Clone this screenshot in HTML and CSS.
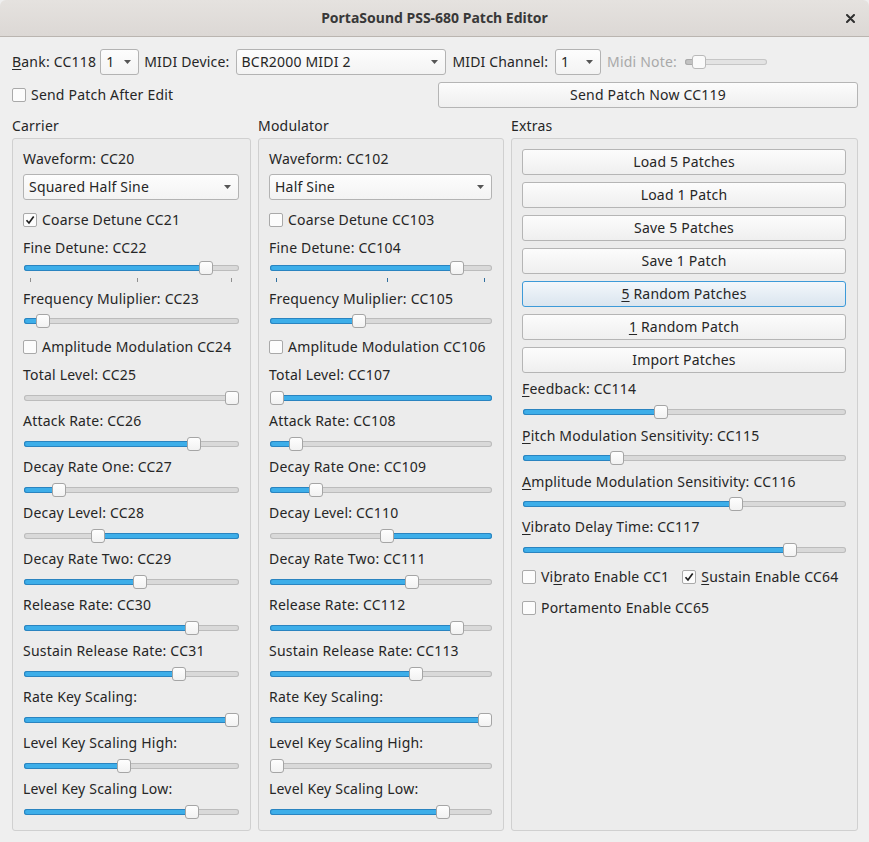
FILE: index.html
```html
<!DOCTYPE html>
<html>
<head>
<meta charset="utf-8">
<title>PortaSound PSS-680 Patch Editor</title>
<link rel="stylesheet" href="styles.css">
</head>
<body>
<div class="window">
  <header class="titlebar">
    <span></span>
    <span class="title">PortaSound PSS-680 Patch Editor</span>
    <svg class="close" width="9" height="9" viewBox="0 0 9 9"><path d="M1 1L8 8M8 1L1 8" stroke="#2f2f2f" stroke-width="2" stroke-linecap="round"/></svg>
  </header>

  <div class="content">
    <div class="toolbar">
      <span><u>B</u>ank: CC118</span>
      <div class="combo w-bank"><span>1</span><svg class="arrow" width="7" height="4" viewBox="0 0 7 4"><path d="M0 0H7L3.5 4Z" fill="#555"/></svg></div>
      <span class="lbl-dev">MIDI Device:</span>
      <div class="combo w-dev"><span>BCR2000 MIDI 2</span><svg class="arrow" width="7" height="4" viewBox="0 0 7 4"><path d="M0 0H7L3.5 4Z" fill="#555"/></svg></div>
      <span class="lbl-ch">MIDI Channel:</span>
      <div class="combo w-ch"><span>1</span><svg class="arrow" width="7" height="4" viewBox="0 0 7 4"><path d="M0 0H7L3.5 4Z" fill="#555"/></svg></div>
      <span class="lbl-note disabled">Midi Note:</span>
      <div class="slider mini" style="--p:0.103"><div class="track"><div class="fill"></div></div><div class="handle"></div></div>
    </div>

    <div class="row2">
      <div class="check"><span class="box"></span><span>Send Patch After Edit</span></div>
      <div class="btn">Send Patch Now CC119</div>
    </div>

    <div class="columns">
      <section class="col">
        <div class="col-title">Carrier</div>
        <div class="group">
          <div class="lbl mt0">Waveform: CC20</div>
          <div class="combo"><span>Squared Half Sine</span><svg class="arrow" width="7" height="4" viewBox="0 0 7 4"><path d="M0 0H7L3.5 4Z" fill="#555"/></svg></div>
          <div class="check mt10"><span class="box"><svg width="10" height="10" viewBox="0 0 10 10"><path d="M1.5 5.2L4 8L8.7 1.5" fill="none" stroke="#1e1e1e" stroke-width="1.7"/></svg></span><span>Coarse Detune CC21</span></div>
          <div class="lbl mt8">Fine Detune: CC22</div>
          <div class="slider ticked mt1" style="--p:0.87"><div class="track"><div class="fill"></div></div><div class="handle"></div><div class="ticks ticks-car"></div></div>
          <div class="lbl">Frequency Muliplier: CC23</div>
          <div class="slider mt3" style="--p:0.06"><div class="track"><div class="fill"></div></div><div class="handle"></div></div>
          <div class="check mt7"><span class="box"></span><span>Amplitude Modulation CC24</span></div>
          <div class="lbl mt8">Total Level: CC25</div>
          <div class="slider inv" style="--p:1"><div class="track"><div class="fill"></div></div><div class="handle"></div></div>
          <div class="lbl">Attack Rate: CC26</div>
          <div class="slider" style="--p:0.81"><div class="track"><div class="fill"></div></div><div class="handle"></div></div>
          <div class="lbl">Decay Rate One: CC27</div>
          <div class="slider" style="--p:0.14"><div class="track"><div class="fill"></div></div><div class="handle"></div></div>
          <div class="lbl">Decay Level: CC28</div>
          <div class="slider inv" style="--p:0.335"><div class="track"><div class="fill"></div></div><div class="handle"></div></div>
          <div class="lbl">Decay Rate Two: CC29</div>
          <div class="slider" style="--p:0.54"><div class="track"><div class="fill"></div></div><div class="handle"></div></div>
          <div class="lbl">Release Rate: CC30</div>
          <div class="slider" style="--p:0.80"><div class="track"><div class="fill"></div></div><div class="handle"></div></div>
          <div class="lbl">Sustain Release Rate: CC31</div>
          <div class="slider" style="--p:0.735"><div class="track"><div class="fill"></div></div><div class="handle"></div></div>
          <div class="lbl">Rate Key Scaling:</div>
          <div class="slider" style="--p:1"><div class="track"><div class="fill"></div></div><div class="handle"></div></div>
          <div class="lbl">Level Key Scaling High:</div>
          <div class="slider" style="--p:0.465"><div class="track"><div class="fill"></div></div><div class="handle"></div></div>
          <div class="lbl">Level Key Scaling Low:</div>
          <div class="slider" style="--p:0.80"><div class="track"><div class="fill"></div></div><div class="handle"></div></div>
        </div>
      </section>

      <section class="col">
        <div class="col-title">Modulator</div>
        <div class="group">
          <div class="lbl mt0">Waveform: CC102</div>
          <div class="combo"><span>Half Sine</span><svg class="arrow" width="7" height="4" viewBox="0 0 7 4"><path d="M0 0H7L3.5 4Z" fill="#555"/></svg></div>
          <div class="check mt10"><span class="box"></span><span>Coarse Detune CC103</span></div>
          <div class="lbl mt8">Fine Detune: CC104</div>
          <div class="slider ticked mt1" style="--p:0.865"><div class="track"><div class="fill"></div></div><div class="handle"></div><div class="ticks ticks-mod"></div></div>
          <div class="lbl">Frequency Muliplier: CC105</div>
          <div class="slider mt3" style="--p:0.396"><div class="track"><div class="fill"></div></div><div class="handle"></div></div>
          <div class="check mt7"><span class="box"></span><span>Amplitude Modulation CC106</span></div>
          <div class="lbl mt8">Total Level: CC107</div>
          <div class="slider inv" style="--p:0"><div class="track"><div class="fill"></div></div><div class="handle"></div></div>
          <div class="lbl">Attack Rate: CC108</div>
          <div class="slider" style="--p:0.092"><div class="track"><div class="fill"></div></div><div class="handle"></div></div>
          <div class="lbl">Decay Rate One: CC109</div>
          <div class="slider" style="--p:0.188"><div class="track"><div class="fill"></div></div><div class="handle"></div></div>
          <div class="lbl">Decay Level: CC110</div>
          <div class="slider inv" style="--p:0.531"><div class="track"><div class="fill"></div></div><div class="handle"></div></div>
          <div class="lbl">Decay Rate Two: CC111</div>
          <div class="slider" style="--p:0.647"><div class="track"><div class="fill"></div></div><div class="handle"></div></div>
          <div class="lbl">Release Rate: CC112</div>
          <div class="slider" style="--p:0.865"><div class="track"><div class="fill"></div></div><div class="handle"></div></div>
          <div class="lbl">Sustain Release Rate: CC113</div>
          <div class="slider" style="--p:0.667"><div class="track"><div class="fill"></div></div><div class="handle"></div></div>
          <div class="lbl">Rate Key Scaling:</div>
          <div class="slider" style="--p:1"><div class="track"><div class="fill"></div></div><div class="handle"></div></div>
          <div class="lbl">Level Key Scaling High:</div>
          <div class="slider" style="--p:0"><div class="track"><div class="fill"></div></div><div class="handle"></div></div>
          <div class="lbl">Level Key Scaling Low:</div>
          <div class="slider" style="--p:0.797"><div class="track"><div class="fill"></div></div><div class="handle"></div></div>
        </div>
      </section>

      <section class="col">
        <div class="col-title">Extras</div>
        <div class="group">
          <div class="btn mt0">Load 5 Patches</div>
          <div class="btn stack">Load 1 Patch</div>
          <div class="btn stack">Save 5 Patches</div>
          <div class="btn stack">Save 1 Patch</div>
          <div class="btn stack focus"><span><u>5</u> Random Patches</span></div>
          <div class="btn stack"><span><u>1</u> Random Patch</span></div>
          <div class="btn stack">Import Patches</div>
          <div class="lbl mt6"><u>F</u>eedback: CC114</div>
          <div class="slider" style="--p:0.425"><div class="track"><div class="fill"></div></div><div class="handle"></div></div>
          <div class="lbl mt5"><u>P</u>itch Modulation Sensitivity: CC115</div>
          <div class="slider mt3" style="--p:0.283"><div class="track"><div class="fill"></div></div><div class="handle"></div></div>
          <div class="lbl mt5"><u>A</u>mplitude Modulation Sensitivity: CC116</div>
          <div class="slider mt3" style="--p:0.667"><div class="track"><div class="fill"></div></div><div class="handle"></div></div>
          <div class="lbl"><u>V</u>ibrato Delay Time: CC117</div>
          <div class="slider" style="--p:0.842"><div class="track"><div class="fill"></div></div><div class="handle"></div></div>
          <div class="check-row mt8">
            <div class="check"><span class="box"></span><span>Vi<u>b</u>rato Enable CC1</span></div>
            <div class="check"><span class="box"><svg width="10" height="10" viewBox="0 0 10 10"><path d="M1.5 5.2L4 8L8.7 1.5" fill="none" stroke="#1e1e1e" stroke-width="1.7"/></svg></span><span><u>S</u>ustain Enable CC64</span></div>
          </div>
          <div class="check mt11"><span class="box"></span><span>Portamento Enable CC65</span></div>
        </div>
      </section>
    </div>
  </div>
</div>
</body>
</html>
```

FILE: styles.css
```css
* { box-sizing: border-box; }

html, body {
  margin: 0;
  padding: 0;
}

body {
  width: 869px;
  height: 842px;
  overflow: hidden;
  background: #efefef;
  font-family: "Noto Sans", "DejaVu Sans", sans-serif;
  font-size: 14px;
  line-height: 20px;
  letter-spacing: 0.2px;
  color: #262626;
}

u {
  text-decoration-thickness: 1px;
  text-underline-offset: 2px;
}

.window {
  height: 842px;
  display: flex;
  flex-direction: column;
}

/* ---- title bar ---- */
.titlebar {
  flex: none;
  height: 37px;
  display: grid;
  grid-template-columns: 1fr auto 1fr;
  align-items: center;
  padding: 0 14px 0 14px;
  background: linear-gradient(#e5e2df, #dcd8d5);
  border-bottom: 1px solid #bab5b0;
  border-radius: 6px 6px 0 0;
}

.title {
  font-weight: bold;
  letter-spacing: 0;
  color: #383838;
}

.close {
  justify-self: end;
}

/* ---- content ---- */
.content {
  flex: 1;
  display: flex;
  flex-direction: column;
  padding: 12px 11px 11px 12px;
}

.toolbar {
  height: 26px;
  display: flex;
  align-items: center;
  gap: 4px;
  white-space: nowrap;
}

.lbl-dev { margin-left: 1px; }
.lbl-ch { margin-left: 3px; letter-spacing: 0.12px; }
.lbl-note { margin-left: 2px; }

.disabled {
  color: #a9a9a9;
}

.combo {
  height: 26px;
  margin-top: 5px;
  display: flex;
  align-items: center;
  justify-content: space-between;
  padding: 0 7px 0 5px;
  border: 1px solid #b3b3b3;
  border-radius: 3px;
  background: linear-gradient(#fdfdfd, #f3f3f3);
  white-space: nowrap;
}

.toolbar .combo { margin-top: 0; }
.w-bank { width: 39px; }
.w-dev { width: 210px; margin-left: 2px; }
.w-ch { width: 46px; margin-left: 3px; }

.arrow { flex: none; }

.row2 {
  margin-top: 7px;
  height: 26px;
  display: grid;
  grid-template-columns: 1fr 1fr;
  column-gap: 6px;
  align-items: center;
}

.btn {
  height: 26px;
  display: flex;
  align-items: center;
  justify-content: center;
  border: 1px solid #b5b5b5;
  border-radius: 3px;
  background: linear-gradient(#fcfcfc, #efefef);
  white-space: nowrap;
}

.btn.stack { margin-top: 7px; }

.btn.focus {
  border-color: #3d9ad8;
  background: linear-gradient(#f3f7fb, #dae5ef);
}

/* ---- checkboxes ---- */
.check {
  height: 20px;
  display: flex;
  align-items: center;
  gap: 5px;
  white-space: nowrap;
}

.box {
  flex: none;
  width: 14px;
  height: 14px;
  border: 1px solid #a9a9a9;
  border-radius: 2px;
  background: #fcfcfc;
  display: flex;
  align-items: center;
  justify-content: center;
}

.check-row {
  display: flex;
  gap: 13px;
}

/* ---- columns & groups ---- */
.columns {
  flex: 1;
  margin-top: 8px;
  display: grid;
  grid-template-columns: 239px 246px 1fr;
  column-gap: 7px;
}

.col {
  display: flex;
  flex-direction: column;
}

.col-title {
  height: 20px;
  margin-bottom: 2px;
}

.group {
  flex: 1;
  display: flex;
  flex-direction: column;
  padding: 10px 11px 0 10px;
  border: 1px solid #d0d0d0;
  border-radius: 3px;
  background: #ececec;
}

.lbl {
  height: 20px;
  margin-top: 4px;
  white-space: nowrap;
}

/* ---- sliders ---- */
.slider {
  position: relative;
  height: 18px;
  margin-top: 4px;
  padding-top: 6px;
  margin-left: 1px;
}

.slider.ticked { height: 26px; }

.track {
  height: 6px;
  border-radius: 3px;
  background: #d9d9d9;
  box-shadow: inset 0 0 0 1px #bcbcbc;
  display: flex;
}

.fill {
  height: 6px;
  width: calc(7px + (100% - 14px) * var(--p));
  border-radius: 3px;
  background: #3daee9;
  box-shadow: inset 0 0 0 1px #2a84c0;
}

.inv .fill {
  width: auto;
  flex: 1;
  margin-left: calc(7px + (100% - 14px) * var(--p));
}

.handle {
  position: absolute;
  top: 2px;
  left: calc((100% - 14px) * var(--p));
  width: 14px;
  height: 14px;
  border: 1px solid #a5a5a5;
  border-radius: 3px;
  background: linear-gradient(#fefefe, #f2f2f2);
}

.ticks {
  height: 4px;
  margin-top: 7px;
  background-repeat: no-repeat;
  background-size: 1px 4px;
}

.ticks-car {
  background-image: linear-gradient(#8f8f8f, #8f8f8f), linear-gradient(#8f8f8f, #8f8f8f), linear-gradient(#8f8f8f, #8f8f8f);
  background-position: 6px 0, 113px 0, 207px 0;
}

.ticks-mod {
  background-image: linear-gradient(#2f6f9f, #2f6f9f), linear-gradient(#2f6f9f, #2f6f9f), linear-gradient(#2f6f9f, #2f6f9f);
  background-position: 6px 0, 117px 0, 214px 0;
}

.slider.mini {
  width: 82px;
  margin-top: 0;
  margin-left: 4px;
  height: 18px;
}

.mini .track {
  background: #e3e3e3;
  box-shadow: inset 0 0 0 1px #c6c6c6;
}

.mini .fill {
  background: #c2c2c2;
  box-shadow: inset 0 0 0 1px #a9a9a9;
}

.mini .handle {
  border-color: #b9b9b9;
  background: #fafafa;
}

/* spacing modifiers */
.mt0 { margin-top: 0; }
.mt1 { margin-top: 1px; }
.mt3 { margin-top: 3px; }
.mt5 { margin-top: 5px; }
.mt6 { margin-top: 6px; }
.mt7 { margin-top: 7px; }
.mt8 { margin-top: 8px; }
.mt10 { margin-top: 10px; }
.mt11 { margin-top: 11px; }
```
